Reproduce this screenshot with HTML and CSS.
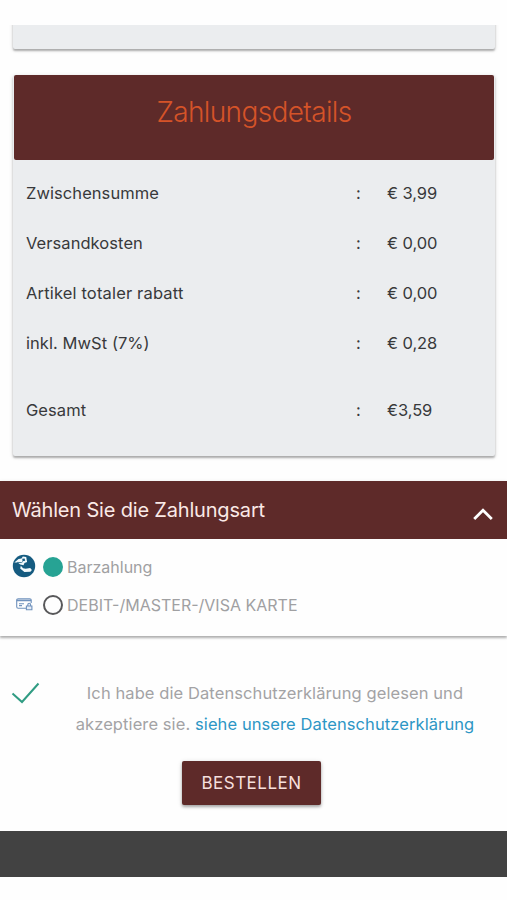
FILE: index.html
```html
<!DOCTYPE html>
<html lang="de">
<head>
<meta charset="utf-8">
<title>Zahlungsdetails</title>
<link rel="stylesheet" href="styles.css">
</head>
<body>
<main class="page">
  <div class="clip"><section class="card card-end"></section></div>
  <section class="card details">
    <h1 class="details-title">Zahlungsdetails</h1>
    <div class="rows">
      <div class="row"><span>Zwischensumme</span><span>:</span><span class="amount">€ 3,99</span></div>
      <div class="row"><span>Versandkosten</span><span>:</span><span class="amount">€ 0,00</span></div>
      <div class="row"><span class="discount">Artikel totaler rabatt</span><span>:</span><span class="amount">€ 0,00</span></div>
      <div class="row"><span>inkl. MwSt (7%)</span><span>:</span><span class="amount">€ 0,28</span></div>
      <div class="row total"><span>Gesamt</span><span>:</span><span class="amount">€3,59</span></div>
    </div>
  </section>
  <section class="payment">
    <header class="payment-head">
      <span>Wählen Sie die Zahlungsart</span>
      <svg class="chevron" width="20" height="14" viewBox="0 0 20 14"><path d="M1.2 12 10 3.3l8.8 8.7" fill="none" stroke="#fff" stroke-width="2.8"/></svg>
    </header>
    <div class="options">
      <label class="option">
        <svg class="pay-icon" width="24" height="24" viewBox="0 0 24 24">
          <circle cx="12" cy="12" r="11.2" fill="#155b80"/>
          <path d="M2.3 8.6 6.5 5l3-.4 1.3-2 3.4.3.9 5.2-2.6.9-1 2.2-3.2-.6-2.6-2z" fill="#f4fafc"/>
          <path d="m10.2 4.7 2.4-.3.6 2.4-2.6.4z" fill="#155b80"/>
          <path d="m5.2 8.4 4.2.2 1.5-1.1" fill="none" stroke="#155b80" stroke-width=".8"/>
          <path d="m8.8 11.8 2.3 2.4 2.5.6 4.6-.7 1.7 2-1.5 1.7-6 .2-4.2-3.4z" fill="#f4fafc"/>
        </svg>
        <span class="radio checked"></span>
        <span>Barzahlung</span>
      </label>
      <label class="option">
        <svg class="pay-icon" width="24" height="24" viewBox="0 0 24 24">
          <g fill="none" stroke="#7092bd" stroke-width="1.1">
            <path d="M14 16.3H6.2q-1.5 0-1.5-1.5V8q0-1.2 1.5-1.2h11.5q1.5 0 1.5 1.2v3"/>
            <path d="M4.7 8.4h14.5" stroke-width="1.7"/>
            <path d="M7 11.7h5M7 13.6h3"/>
            <path d="M14.4 14h5.5v3.8h-5.5zM15.8 14v-1.3a1.4 1.4 0 0 1 2.8 0V14" fill="#e6edf6"/>
          </g>
        </svg>
        <span class="radio"></span>
        <span>DEBIT-/MASTER-/VISA KARTE</span>
      </label>
    </div>
  </section>
  <section class="consent">
    <svg class="check" width="30" height="24" viewBox="0 0 30 24"><path d="M1.5 11.5 11 20 27.5 1.5" fill="none" stroke="#309c83" stroke-width="2"/></svg>
    <p class="consent-text">Ich habe die Datenschutzerklärung gelesen und<br>akzeptiere sie. <a class="link">siehe unsere Datenschutzerklärung</a></p>
  </section>
  <button class="order">BESTELLEN</button>
  <footer class="footer"></footer>
</main>
</body>
</html>
```
FILE: styles.css
```css
* { box-sizing: border-box; }
body { margin: 0; background: #fefefe; font-family: Inter, "Liberation Sans", sans-serif; }
.page { display: flex; flex-direction: column; width: 507px; height: 900px; padding-top: 25px; overflow: hidden; }
.clip { height: 50px; padding: 0 12px 0 13px; overflow: hidden; flex: none; }
.card { background: #ebedef; border-radius: 2px; box-shadow: 0 2px 2px rgba(0,0,0,.26), 0 1px 4px rgba(0,0,0,.15); }
.card-end { height: 34px; margin-top: -10px; }
.details { height: 381px; margin: 0 12px 0 13px; flex: none; }
.details-title { height: 85px; margin: 0 1px; background: #5e2a29; border-radius: 2px; color: #d55328; font-size: 28px; font-weight: 300; line-height: 75px; text-align: center; letter-spacing: -.63px; }
.rows { padding: 8px 13px; }
.row { display: grid; grid-template-columns: 330px 31px 1fr; height: 50px; line-height: 50px; font-size: 16.5px; color: #38393b; letter-spacing: .06px; }
.discount { letter-spacing: .16px; }
.amount { letter-spacing: -.07px; }
.total { margin-top: 17px; }
.payment { height: 155px; margin-top: 25px; flex: none; background: #fefefe; box-shadow: 0 2px 2px rgba(0,0,0,.25), 0 1px 4px rgba(0,0,0,.12); }
.payment-head { display: flex; justify-content: space-between; height: 58px; padding: 0 14px 0 12px; background: #5e2a29; color: #fae9e6; font-size: 20px; line-height: 58px; letter-spacing: -.18px; }
.chevron { margin-top: 26px; }
.options { padding-top: 9px; }
.option { display: flex; align-items: center; height: 38px; padding-left: 12px; color: #a0a0a2; font-size: 16px; }
.pay-icon { margin-top: -3px; }
.radio { width: 20px; height: 20px; margin: 0 4px 0 7px; border: 2.5px solid #58585a; border-radius: 50%; }
.radio.checked { background: #27a394; border-color: #27a394; }
.consent { display: flex; height: 61px; margin-top: 42px; flex: none; }
.check { margin: 4px 25px 0 11px; flex: none; }
.consent-text { width: 418px; margin: 0; color: #a3a3a5; font-size: 16.5px; line-height: 30.5px; text-align: center; white-space: nowrap; letter-spacing: .09px; }
.link { color: #2d96c5; }
.order { width: 139px; height: 44px; margin: 22px 0 0 182px; padding: 0; flex: none; border: 0; border-radius: 2px; background: #5e2a29; color: #f6dfdd; font: 17px Inter, sans-serif; letter-spacing: .5px; box-shadow: 0 2px 3px rgba(0,0,0,.28), 0 1px 5px rgba(0,0,0,.15); }
.footer { height: 46px; margin-top: 26px; flex: none; background: #424242; }
```
